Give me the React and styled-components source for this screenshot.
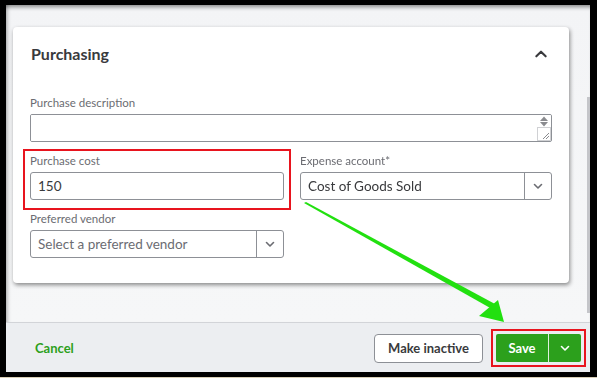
import React from "react";
import styled, { createGlobalStyle } from "styled-components";

const Global = createGlobalStyle`
  html, body { margin: 0; padding: 0; background: #000; }
  body { font-family: Lato, "Open Sans", Arial, sans-serif; }
  * { box-sizing: border-box; }
`;

const Frame = styled.div`
  width: 597px;
  height: 378px;
  background: #000;
  padding: 5px 7px 5px 6px;
  border-bottom: 1px solid #d9cfb6;
  display: flex;
`;

const Inner = styled.div`
  flex: 1;
  display: flex;
  flex-direction: column;
  background: #f3f4f6;
  overflow: hidden;
`;

const ScrollArea = styled.div`
  position: relative;
  flex: 1;
  padding: 22px 21px 0 7px;
  box-shadow: inset 0 5px 4px -3px rgba(0, 0, 0, 0.45), inset 5px 0 4px -4px rgba(0, 0, 0, 0.35);
  background: linear-gradient(#f3f4f6, #f6f7f8);
`;

const ScrollThumb = styled.div`
  position: absolute;
  right: 0;
  top: 92px;
  width: 3px;
  height: 216px;
  background: #c4c5c9;
`;

const Card = styled.section`
  background: #fff;
  border-radius: 4px;
  box-shadow: 1px 2px 4px rgba(0, 0, 0, 0.45);
  padding: 17px 17px 24px;
  height: 256px;
`;

const Header = styled.div`
  display: flex;
  align-items: center;
  justify-content: space-between;
  height: 20px;
  margin-bottom: 32px;
  padding-left: 1px;
`;

const Title = styled.h2`
  margin: 0;
  font-size: 16px;
  font-weight: 700;
  color: #393a3d;
  line-height: 20px;
`;

const Fields = styled.div`
  display: grid;
  grid-template-columns: 254px 252px;
  column-gap: 16px;
  row-gap: 12px;
`;

const Field = styled.div`
  position: relative;
  grid-column: ${(p) => (p.$full ? "1 / -1" : "auto")};
  display: flex;
  flex-direction: column;
  gap: 4px;
  ${(p) =>
    p.$highlight &&
    `
    &::after {
      content: "";
      position: absolute;
      top: -5px;
      bottom: -10px;
      left: -7px;
      right: -7px;
      border: 2px solid #e8141e;
      pointer-events: none;
    }
  `}
`;

const Label = styled.label`
  font-size: 11.5px;
  line-height: 14px;
  color: #6b6c72;
`;

const TextAreaWrap = styled.div`
  position: relative;
  height: 28px;
`;

const TextArea = styled.textarea`
  width: 100%;
  height: 28px;
  border: 1px solid #8d9096;
  border-radius: 2px;
  resize: none;
  font: inherit;
  padding: 4px 8px;
  outline: none;
`;

const ResizeCtl = styled.svg`
  position: absolute;
  right: 1px;
  top: 1px;
`;

const Input = styled.input`
  height: 28px;
  border: 1px solid #8d9096;
  border-radius: 3px;
  padding: 0 7px;
  font-family: Lato, "Open Sans", Arial, sans-serif;
  font-size: 13.5px;
  color: #393a3d;
  outline: none;
`;

const Select = styled.div`
  height: 28px;
  border: 1px solid #8d9096;
  border-radius: 3px;
  display: flex;
  align-items: stretch;
`;

const SelectValue = styled.div`
  flex: 1;
  display: flex;
  align-items: center;
  padding: 0 7px;
  font-size: 13.5px;
  color: ${(p) => (p.$placeholder ? "#6b6c72" : "#393a3d")};
`;

const SelectToggle = styled.div`
  width: 27px;
  border-left: 1px solid #8d9096;
  display: flex;
  align-items: center;
  justify-content: center;
`;

const Footer = styled.footer`
  height: 50px;
  border-top: 1px solid #d2d4d8;
  background: #eceef1;
  display: flex;
  align-items: center;
  padding: 1px 4px 0 29px;
`;

const LinkButton = styled.button`
  border: none;
  background: none;
  font-family: inherit;
  font-size: 13px;
  font-weight: 700;
  color: #2ca01c;
  padding: 0;
  cursor: pointer;
`;

const Spacer = styled.div`
  flex: 1;
`;

const SecondaryButton = styled.button`
  height: 29px;
  width: 109px;
  padding: 0;
  border: 1px solid #8d9096;
  border-radius: 4px;
  background: #fff;
  font-family: inherit;
  font-size: 13px;
  font-weight: 700;
  color: #393a3d;
  margin-right: 8px;
`;

const Highlight = styled.div`
  border: 2px solid #e8141e;
  padding: 3px;
`;

const SplitButton = styled.div`
  display: flex;
  height: 28px;
  background: #2ca01c;
  border-radius: 2px;
`;

const PrimaryButton = styled.button`
  width: 53px;
  border: none;
  background: none;
  color: #fff;
  font-family: inherit;
  font-size: 13px;
  font-weight: 700;
  border-right: 1px solid rgba(255, 255, 255, 0.85);
`;

const MenuToggle = styled.button`
  width: 32px;
  border: none;
  background: none;
  display: flex;
  align-items: center;
  justify-content: center;
`;

const Arrow = styled.svg`
  position: absolute;
  left: 0;
  top: 0;
  pointer-events: none;
`;

const Stage = styled.div`
  position: relative;
`;

const HeaderIcon = styled.span`
  display: flex;
  margin-right: 4px;
`;

const Chevron = ({ up, color = "#6b6c72", size = 12, width = 1.6 }) => (
  <svg width={size} height={size} viewBox="0 0 12 12" fill="none">
    <path
      d={up ? "M2 8 L6 4 L10 8" : "M2.5 4.5 L6 8 L9.5 4.5"}
      stroke={color}
      strokeWidth={width}
      strokeLinecap="round"
      strokeLinejoin="round"
    />
  </svg>
);

export default function App() {
  return (
    <Stage>
      <Global />
      <Frame>
        <Inner>
          <ScrollArea>
            <ScrollThumb />
            <Card>
              <Header>
                <Title>Purchasing</Title>
                <HeaderIcon>
                  <Chevron up color="#393a3d" size={14} width={1.8} />
                </HeaderIcon>
              </Header>
              <Fields>
                <Field $full>
                  <Label>Purchase description</Label>
                  <TextAreaWrap>
                    <TextArea />
                    <ResizeCtl width="14" height="26" viewBox="0 0 14 26">
                      <path d="M3 6 L7 1.5 L11 6 Z" fill="#8a8b8f" />
                      <path d="M3 7 L7 11.5 L11 7 Z" fill="#8a8b8f" />
                      <rect x="0.5" y="12.5" width="13" height="13" fill="#fff" stroke="#d0d1d4" />
                      <path d="M6 24 L12 18 M9 24 L12 21" stroke="#8a8b8f" strokeWidth="1" />
                    </ResizeCtl>
                  </TextAreaWrap>
                </Field>
                <Field $highlight>
                  <Label>Purchase cost</Label>
                  <Input defaultValue="150" />
                </Field>
                <Field>
                  <Label>Expense account*</Label>
                  <Select>
                    <SelectValue>Cost of Goods Sold</SelectValue>
                    <SelectToggle>
                      <Chevron />
                    </SelectToggle>
                  </Select>
                </Field>
                <Field>
                  <Label>Preferred vendor</Label>
                  <Select>
                    <SelectValue $placeholder>Select a preferred vendor</SelectValue>
                    <SelectToggle>
                      <Chevron />
                    </SelectToggle>
                  </Select>
                </Field>
              </Fields>
            </Card>
          </ScrollArea>
          <Footer>
            <LinkButton>Cancel</LinkButton>
            <Spacer />
            <SecondaryButton>Make inactive</SecondaryButton>
            <Highlight>
              <SplitButton>
                <PrimaryButton>Save</PrimaryButton>
                <MenuToggle>
                  <Chevron color="#fff" />
                </MenuToggle>
              </SplitButton>
            </Highlight>
          </Footer>
        </Inner>
      </Frame>
      <Arrow width="597" height="378" viewBox="0 0 597 378">
        <polygon points="304,203 306,202 495,304 492,309" fill="#22e010" />
        <polygon points="504,322 479,316 498,300" fill="#22e010" />
      </Arrow>
    </Stage>
  );
}
